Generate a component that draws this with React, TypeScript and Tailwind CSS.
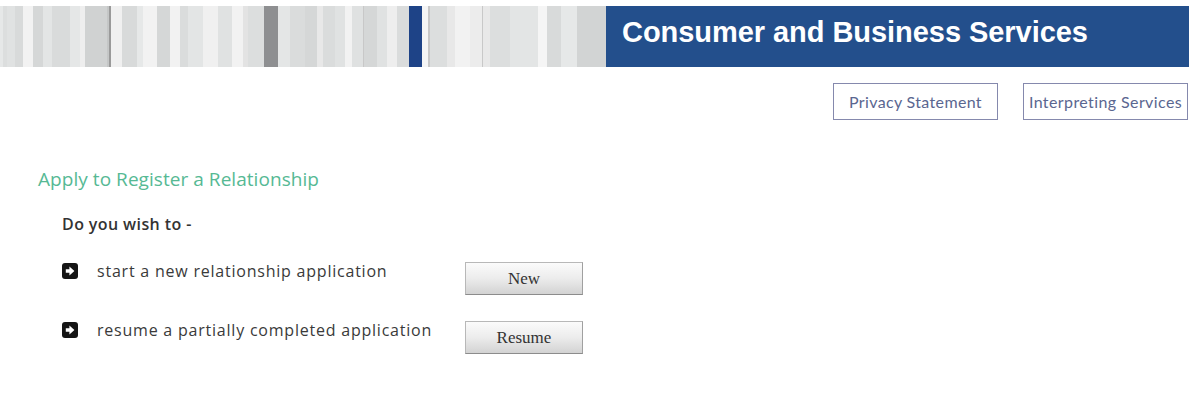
import React from "react";

const stripes: [number, string][] = [
  [3, "#e6e8e8"], [4, "#dcdede"], [8, "#e0e2e2"], [8, "#d8dada"], [10, "#f2f2f2"],
  [10, "#d5d7d7"], [9, "#e3e5e5"], [18, "#d9dbdb"], [10, "#e5e7e7"], [5, "#eeeeee"],
  [22, "#d0d2d2"], [2, "#c4c6c6"], [2, "#9a9a9a"], [11, "#f0f0f0"], [15, "#d8dada"],
  [6, "#e6e8e8"], [14, "#f2f2f2"], [13, "#d5d7d7"], [10, "#f2f2f2"], [8, "#dadcdc"],
  [15, "#e3e5e5"], [15, "#f0f0f0"], [14, "#e0e2e2"], [11, "#f2f2f2"], [5, "#e3e3e3"],
  [16, "#dcdede"], [14, "#8e8f91"], [12, "#e4e6e6"], [15, "#dadcdc"], [12, "#d5d7d7"],
  [6, "#e8e8e8"], [12, "#dadcdc"], [10, "#e0e2e2"], [7, "#f2f2f2"], [11, "#dfe1e1"],
  [1, "#c8c8c8"], [13, "#d5d7d7"], [10, "#e0e2e2"], [10, "#eeeeee"], [12, "#dadcdc"],
  [13, "#1e4387"], [6, "#f5f5f5"], [2, "#c8c8c8"], [17, "#dcdede"], [8, "#e8e8e8"],
  [15, "#f2f2f2"], [12, "#ececec"], [1, "#c8c8c8"], [7, "#e8e8e8"], [20, "#dcdede"],
  [28, "#e3e5e5"], [9, "#f5f5f5"], [14, "#d8dada"], [16, "#e6e8e8"], [29, "#d2d4d4"],
];

function ArrowIcon() {
  return (
    <svg width="16" height="16" viewBox="0 0 16 16" className="shrink-0">
      <rect x="0" y="0" width="16" height="16" rx="3" fill="#151515" />
      <path d="M3.8 6.2 H7.4 V3.5 L12.4 8 L7.4 12.5 V9.8 H3.8 Z" fill="#ffffff" />
    </svg>
  );
}

function GreyButton({ label }: { label: string }) {
  return (
    <button
      className="w-[118px] h-[33px] shrink-0 border border-[#b8b8b8] border-b-[#8c8c8c] border-r-[#a0a0a0] bg-gradient-to-b from-[#fbfbfb] via-[#ececec] to-[#d3d3d3] text-[17px] text-[#333] leading-none flex items-center justify-center"
      style={{ fontFamily: '"Liberation Serif", serif' }}
    >
      {label}
    </button>
  );
}

function Row({ text, btn }: { text: string; btn: string }) {
  return (
    <div className="flex items-start">
      <div className="pt-[1px]">
        <ArrowIcon />
      </div>
      <div className="w-[368px] ml-[19px] text-[16px] leading-[20px] text-[#3a3a3a] font-medium -mt-[1px] tracking-[0.78px]">
        {text}
      </div>
      <GreyButton label={btn} />
    </div>
  );
}

export default function App() {
  return (
    <div className="w-[1200px] h-[404px] bg-white overflow-hidden" style={{ fontFamily: '"Open Sans", sans-serif' }}>
      <div className="pt-[6px] flex h-[67px]">
        <div className="flex w-[606px] h-[61px]">
          {stripes.map(([w, c], i) => (
            <div key={i} className="h-full shrink-0" style={{ width: w, background: c }} />
          ))}
        </div>
        <div className="w-[583px] h-[61px] bg-[#234f8c] pl-[16px] pt-[10px]">
          <div
            className="text-white font-bold text-[29px] leading-[32px] tracking-[-0.05px]"
            style={{ fontFamily: '"Liberation Sans", Arial, sans-serif' }}
          >
            Consumer and Business Services
          </div>
        </div>
      </div>

      <div className="flex justify-end gap-[25px] pr-[12px] mt-[16px]" style={{ fontFamily: 'Lato, sans-serif' }}>
        <div className="w-[165px] h-[37px] border border-[#8589ad] flex items-center justify-center text-[16px] tracking-[0.35px] text-[#5a6690]">
          Privacy Statement
        </div>
        <div className="w-[165px] h-[37px] border border-[#8589ad] flex items-center justify-center text-[16px] tracking-[0.4px] text-[#5a6690]">
          Interpreting Services
        </div>
      </div>

      <div className="pl-[38px] mt-[47px]">
        <div className="text-[19px] leading-[24px] text-[#56b994] font-medium tracking-[0.05px]">Apply to Register a Relationship</div>
        <div className="pl-[24px] mt-[23px]">
          <div className="text-[16px] leading-[20px] font-semibold text-[#333] tracking-[0.4px]">Do you wish to -</div>
          <div className="mt-[28px] flex flex-col gap-[26px]">
            <Row text="start a new relationship application" btn="New" />
            <Row text="resume a partially completed application" btn="Resume" />
          </div>
        </div>
      </div>
    </div>
  );
}
